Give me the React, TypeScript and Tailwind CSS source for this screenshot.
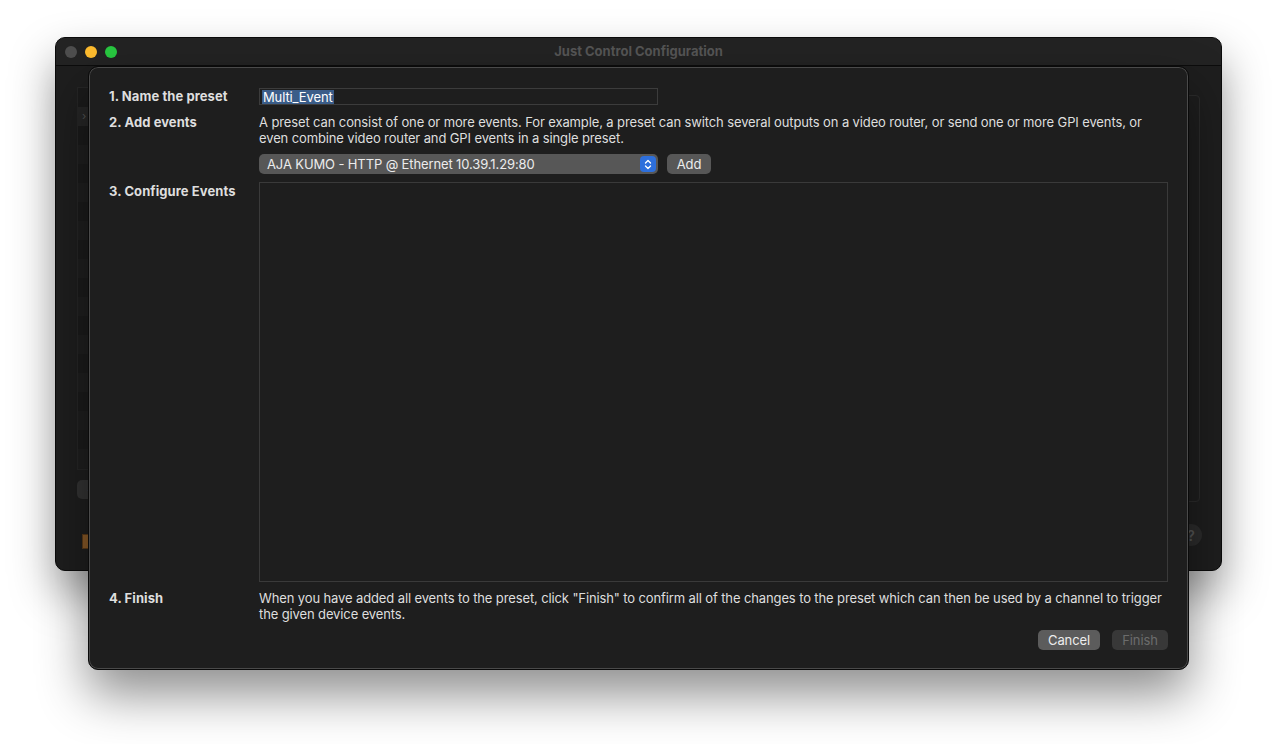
import React from 'react';

const font = { fontFamily: 'Inter, "Noto Sans", "Liberation Sans", sans-serif' };

const SidebarRows = () => {
  const rows = Array.from({ length: 20 }, (_, i) => i);
  return (
    <div className="flex flex-col">
      {rows.map((i) => (
        <div
          key={i}
          className={
            i === 1
              ? 'h-[19px] bg-[#262626] flex items-center pl-[4px] text-[11px] text-[#555]'
              : i % 2 === 0
              ? 'h-[19px] bg-[#1b1b1b]'
              : 'h-[19px] bg-[#1f1f1f]'
          }
        >
          {i === 1 ? '›' : null}
        </div>
      ))}
    </div>
  );
};

const Stepper = () => (
  <div className="w-[16px] h-[16px] rounded-[4px] bg-[#2d6fdc] flex items-center justify-center">
    <svg width="8" height="11" viewBox="0 0 8 11" fill="none" stroke="white" strokeWidth="1.4" strokeLinecap="round" strokeLinejoin="round">
      <path d="M1.5 4 L4 1.5 L6.5 4" />
      <path d="M1.5 7 L4 9.5 L6.5 7" />
    </svg>
  </div>
);

const BackgroundWindow = () => (
  <div className="absolute left-[55px] top-[37px] w-[1167px] h-[534px] rounded-[10px] bg-[#1e1e1e] border border-[#0b0b0b] shadow-[0_22px_45px_rgba(0,0,0,0.38)] overflow-hidden flex flex-col">
    <div className="h-[28px] bg-[#232323] border-b border-[#0c0c0c] relative flex items-center justify-center">
      <div className="absolute left-[9px] top-[8px] flex gap-[8px]">
        <span className="w-[12px] h-[12px] rounded-full bg-[#4e4e4e]" />
        <span className="w-[12px] h-[12px] rounded-full bg-[#febc2e]" />
        <span className="w-[12px] h-[12px] rounded-full bg-[#28c840]" />
      </div>
      <span className="text-[13px] font-bold text-[#555555]">Just Control Configuration</span>
    </div>
    <div className="flex-1 flex px-[21px] pt-[21px] pb-[20px] gap-[10px]">
      <div className="w-[120px] flex flex-col">
        <div className="h-[383px] border border-[#262626] overflow-hidden">
          <SidebarRows />
        </div>
        <div className="mt-[10px] w-[28px] h-[19px] rounded-[5px] bg-[#333] text-[#777] text-[12px] flex items-center justify-center">−</div>
        <div className="mt-[35px] ml-[5px] w-[8px] h-[15px] bg-[#8a5a28] border border-[#5a3a18]" />
      </div>
      <div className="flex-1 flex flex-col items-end">
        <div className="w-full h-[407px] mt-[8px] rounded-[4px] border border-[#2c2c2c]" />
        <div className="mt-[22px] mr-[-2px] w-[22px] h-[22px] rounded-full bg-[#2c2c2c] text-[#555] text-[14px] font-semibold flex items-center justify-center">?</div>
      </div>
    </div>
  </div>
);

const Sheet = () => (
  <div className="absolute left-[88px] top-[66px] w-[1101px] h-[604px] rounded-[10px] bg-[#1e1e1e] border border-[#0a0a0a] shadow-[0_24px_50px_rgba(0,0,0,0.45),inset_0_0_0_1px_#4a4a4a] text-[#dedede] text-[13px] leading-4 tracking-[-0.12px] pl-[20px] pr-[20px] pt-[21px] pb-[19px] flex flex-col">
    <div className="flex">
      <div className="w-[150px] font-bold tracking-[0.08px] leading-[17px]">1. Name the preset</div>
      <div className="w-[399px] h-[17px] border border-[#3c3c3c] bg-[#1e1e1e] flex items-center pl-[2px]">
        <span className="bg-[#3b5d89] text-white leading-[14px] px-[1px]">Multi_Event</span>
      </div>
    </div>
    <div className="flex mt-[9px]">
      <div className="w-[150px] font-bold tracking-[0.08px]">2. Add events</div>
      <div className="flex-1 flex flex-col">
        <p>
          A preset can consist of one or more events. For example, a preset can switch several outputs on a video router, or send one or more GPI events, or
          even combine video router and GPI events in a single preset.
        </p>
        <div className="flex mt-[8px] gap-[9px]">
          <div className="w-[399px] h-[20px] rounded-[5px] bg-[#575757] flex items-center justify-between pl-[8px] pr-[2px] text-[#ececec]">
            <span>AJA KUMO - HTTP @ Ethernet 10.39.1.29:80</span>
            <Stepper />
          </div>
          <div className="w-[44px] h-[20px] rounded-[5px] bg-[#575757] text-[#ececec] flex items-center justify-center">Add</div>
        </div>
      </div>
    </div>
    <div className="flex mt-[8px]">
      <div className="w-[150px] font-bold tracking-[0.08px] pt-[1px]">3. Configure Events</div>
      <div className="flex-1 h-[400px] border border-[#3a3a3a] bg-[#1e1e1e]" />
    </div>
    <div className="flex mt-[8px]">
      <div className="w-[150px] font-bold tracking-[0.08px]">4. Finish</div>
      <p className="flex-1">
        When you have added all events to the preset, click "Finish" to confirm all of the changes to the preset which can then be used by a channel to trigger
        the given device events.
      </p>
    </div>
    <div className="flex justify-end gap-[12px] mt-[8px]">
      <div className="w-[62px] h-[20px] rounded-[5px] bg-[#5c5c5c] text-[#ececec] flex items-center justify-center">Cancel</div>
      <div className="w-[56px] h-[20px] rounded-[5px] bg-[#383838] text-[#6c6c6c] flex items-center justify-center">Finish</div>
    </div>
  </div>
);

export default function App() {
  return (
    <div className="relative w-[1278px] h-[744px] bg-white overflow-hidden" style={font}>
      <BackgroundWindow />
      <Sheet />
    </div>
  );
}
